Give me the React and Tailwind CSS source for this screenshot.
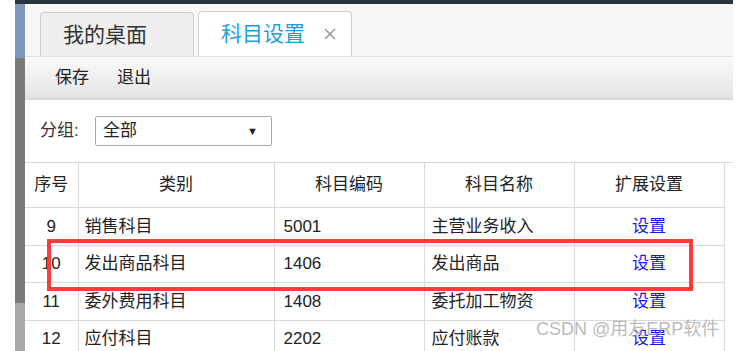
import React from 'react';

const rows = [
  { no: '9', type: '销售科目', code: '5001', name: '主营业务收入' },
  { no: '10', type: '发出商品科目', code: '1406', name: '发出商品' },
  { no: '11', type: '委外费用科目', code: '1408', name: '委托加工物资' },
  { no: '12', type: '应付科目', code: '2202', name: '应付账款' },
];

export default function App() {
  return (
    <div className="relative h-[351px] w-[737px] overflow-hidden bg-white pl-[15px] pr-[4px] font-['Liberation_Sans','Noto_Sans_CJK_SC',sans-serif] text-[#222]">
      <div className="h-[4px] bg-[#2b333e]" />
      <div className="flex h-[347px]">
        {/* left strip */}
        <div className="flex w-[10px] flex-col">
          <div className="h-[54px] bg-[#7e97ba]" />
          <div className="h-[245px] bg-[#7a7a7a]" />
          <div className="flex-1 bg-[#a9a9a9]" />
        </div>

        <div className="flex-1">
          {/* tabs */}
          <div className="flex h-[53px] items-end gap-[4px] border-b border-[#dedede] bg-[#f7f7f7] pl-[15px]">
            <div className="flex h-[44px] w-[154px] items-center rounded-t-[4px] border border-b-0 border-[#cfcfcf] bg-[#efefef] pl-[22px] text-[21px] text-[#333]">
              我的桌面
            </div>
            <div className="flex h-[45px] w-[154px] items-center rounded-t-[4px] border border-b-0 border-[#cfcfcf] bg-white pl-[22px] text-[21px] text-[#1ea0dc]">
              科目设置
              <svg className="ml-[19px]" width="12" height="12" viewBox="0 0 12 12">
                <path d="M1 1L11 11M11 1L1 11" stroke="#9a9a9a" strokeWidth="1.6" />
              </svg>
            </div>
          </div>

          {/* toolbar */}
          <div className="flex h-[43px] items-center gap-[28px] border-b-2 border-[#d3d9de] bg-gradient-to-b from-[#fafafa] to-[#e4e4e4] pl-[30px] text-[17px]">
            <span>保存</span>
            <span>退出</span>
          </div>

          {/* filter */}
          <div className="flex h-[62px] items-center pl-[15px] text-[17px]">
            <span className="w-[55px] text-[#333]">分组:</span>
            <div className="flex h-[30px] w-[177px] items-center justify-between rounded-[2px] border border-[#a9a9a9] pl-[7px] pr-[13px]">
              <span>全部</span>
              <span className="text-[11px]">▼</span>
            </div>
          </div>

          {/* table */}
          <table className="border-collapse text-[17px]">
            <thead>
              <tr className="h-[45px]">
                <th className="w-[53px] border border-l-0 border-[#dadada] text-center font-normal">序号</th>
                <th className="w-[196px] border border-[#dadada] text-center font-normal">类别</th>
                <th className="w-[150px] border border-[#dadada] text-center font-normal">科目编码</th>
                <th className="w-[150px] border border-[#dadada] text-center font-normal">科目名称</th>
                <th className="w-[150px] border border-[#dadada] text-center font-normal">扩展设置</th>
                <th className="w-[9px] border-t border-[#dadada]" />
              </tr>
            </thead>
            <tbody>
              {rows.map((row) => (
                <tr key={row.no} className="h-[37.5px]">
                  <td className="border border-l-0 border-[#dadada] text-center">{row.no}</td>
                  <td className="border border-[#dadada] pl-[6px]">{row.type}</td>
                  <td className="border border-[#dadada] pl-[9px]">{row.code}</td>
                  <td className="border border-[#dadada] pl-[7px]">{row.name}</td>
                  <td className="border border-[#dadada] text-center text-[#1515ee]">设置</td>
                  <td />
                </tr>
              ))}
            </tbody>
          </table>
        </div>
      </div>

      {/* highlight */}
      <div className="absolute left-[47px] top-[239px] h-[52px] w-[646px] border-4 border-[#ff3a3a]" />

      {/* watermark */}
      <div className="absolute left-[536px] top-[316px] text-[18px] text-[#a8a8a8]/80">CSDN @用友ERP软件</div>
    </div>
  );
}
